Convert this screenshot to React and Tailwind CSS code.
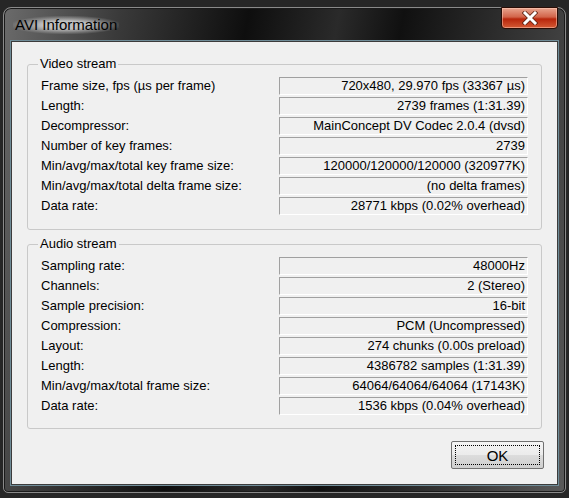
const video = [
  ['Frame size, fps (µs per frame)', '720x480, 29.970 fps (33367 µs)'],
  ['Length:', '2739 frames (1:31.39)'],
  ['Decompressor:', 'MainConcept DV Codec 2.0.4 (dvsd)'],
  ['Number of key frames:', '2739'],
  ['Min/avg/max/total key frame size:', '120000/120000/120000 (320977K)'],
  ['Min/avg/max/total delta frame size:', '(no delta frames)'],
  ['Data rate:', '28771 kbps (0.02% overhead)'],
]

const audio = [
  ['Sampling rate:', '48000Hz'],
  ['Channels:', '2 (Stereo)'],
  ['Sample precision:', '16-bit'],
  ['Compression:', 'PCM (Uncompressed)'],
  ['Layout:', '274 chunks (0.00s preload)'],
  ['Length:', '4386782 samples (1:31.39)'],
  ['Min/avg/max/total frame size:', '64064/64064/64064 (17143K)'],
  ['Data rate:', '1536 kbps (0.04% overhead)'],
]

function Group({ title, rows, className }) {
  return (
    <div className={`relative border border-[#c9c9c9] rounded-[3px] pl-[13px] pr-[13px] pt-[12px] ${className}`}>
      <span className="absolute -top-[9px] left-[10px] px-[2px] bg-[#f0f0f0] leading-[16px]">{title}</span>
      <div className="flex flex-col gap-[2px]">
        {rows.map(([label, value], i) => (
          <div key={i} className="flex items-center h-[18px]">
            <div className="flex-1 whitespace-nowrap">{label}</div>
            <div className="w-[249px] h-[18px] border-t border-l border-[#a0a0a0] border-r border-b border-r-white border-b-white text-right pr-[2px] leading-[16px] whitespace-nowrap">
              {value}
            </div>
          </div>
        ))}
      </div>
    </div>
  )
}

export default function App() {
  return (
    <div className="w-[569px] h-[498px] bg-[#262626] pt-[7px] px-[3px] pb-[5px] font-['Liberation_Sans',Arial,sans-serif] text-[13px] text-black overflow-hidden">
      <div className="h-full flex flex-col rounded-t-[8px] rounded-b-[5px] border border-[#8a8a8a] bg-[linear-gradient(100deg,#6b6b6b_0%,#3a3a3a_18%,#0e0e0e_38%,#2a2a2a_52%,#101010_62%,#3c3c3c_85%,#5a5a5a_100%)] shadow-[inset_0_0_0_1px_#1a1a1a]">
        <div className="h-[33px] flex items-start justify-between pl-[9px] pr-[7px]">
          <div className="mt-[8px] text-[15px] leading-[18px] px-[2px] rounded-[6px] bg-[radial-gradient(ellipse_at_center,rgba(230,230,230,0.75)_30%,rgba(200,200,200,0)_75%)]">
            AVI Information
          </div>
          <div className="-mt-[1px] w-[57px] h-[22px] rounded-b-[4px] border border-[#2a0d05] bg-[linear-gradient(180deg,#e9a48e_0%,#d2644a_45%,#b8260c_55%,#d55a34_100%)] shadow-[inset_0_0_0_1px_rgba(255,210,190,0.5)] flex items-center justify-center">
            <svg width="16" height="14" viewBox="0 0 16 14">
              <path d="M3 2 L13 12 M13 2 L3 12" stroke="#5a2010" strokeWidth="4.5" strokeLinecap="square" />
              <path d="M3 2 L13 12 M13 2 L3 12" stroke="#ffffff" strokeWidth="3" strokeLinecap="square" />
            </svg>
          </div>
        </div>
        <div className="flex-1 mx-[7px] mb-[7px] border border-[#3c3c3c] shadow-[0_0_0_1px_#6f8c98] bg-[#f0f0f0] flex flex-col px-[15px] pt-[22px]">
          <Group title="Video stream" rows={video} className="pb-[14px]" />
          <Group title="Audio stream" rows={audio} className="mt-[14px] pb-[13px]" />
          <div className="flex justify-end mt-[12px] -mr-[2px]">
            <button className="w-[93px] h-[28px] border border-[#707070] rounded-[2px] bg-[linear-gradient(180deg,#f4f4f4_0%,#ebebeb_50%,#dcdcdc_51%,#cfcfcf_100%)] p-[3px] text-[15px]">
              <div className="h-full border border-dotted border-black flex items-center justify-center leading-none">OK</div>
            </button>
          </div>
        </div>
      </div>
    </div>
  )
}
